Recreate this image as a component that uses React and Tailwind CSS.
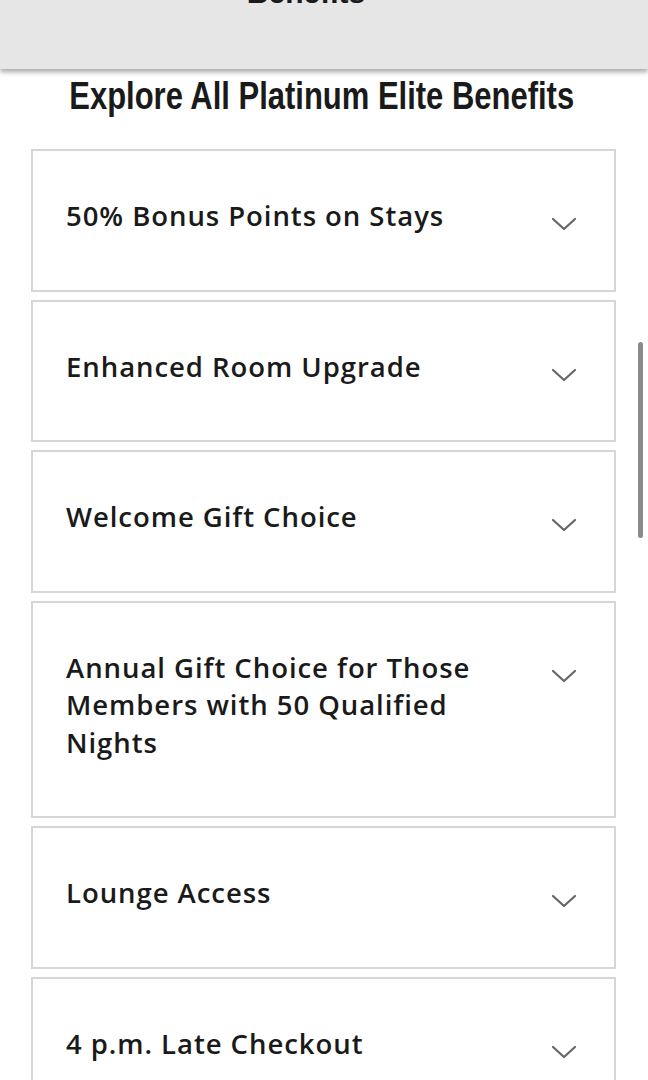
import { ChevronDown } from 'lucide-react'

const benefits = [
  '50% Bonus Points on Stays',
  'Enhanced Room Upgrade',
  'Welcome Gift Choice',
  'Annual Gift Choice for Those Members with 50 Qualified Nights',
  'Lounge Access',
  '4 p.m. Late Checkout',
]

function BenefitRow({ title }) {
  return (
    <div className="flex items-start justify-between border-2 border-[#d6d6d6] bg-white pl-[33px] pr-[37px] pt-[46px] pb-[55px]">
      <span className="max-w-[450px] text-[27.5px] font-semibold leading-[37.5px] tracking-[0.95px] text-[#1a1a1a] [font-family:'Open_Sans','Noto_Sans',sans-serif]">
        {title}
      </span>
      <svg width="26" height="16" viewBox="0 0 26 16" className="mt-[19px] shrink-0" fill="none">
        <path d="M2 3 L13 13 L24 3" stroke="#666666" strokeWidth="2.2" strokeLinecap="round" strokeLinejoin="round" />
      </svg>
    </div>
  )
}

export default function App() {
  return (
    <div className="relative h-[1080px] w-[648px] overflow-hidden bg-white">
      {/* top bar, cut off by the screenshot */}
      <div className="relative z-10 flex h-[69px] flex-col bg-[#e6e6e6] shadow-[0_3px_5px_rgba(0,0,0,0.35)]">
        <div className="-mt-[22px] flex items-center justify-center gap-2 pr-[14px]">
          <span className="text-[30px] font-bold leading-[30px] text-[#1a1a1a] [font-family:'Liberation_Sans',Arial,sans-serif]">
            Benefits
          </span>
          <ChevronDown size={14} strokeWidth={3} className="mt-[6px] text-[#1a1a1a]" />
        </div>
      </div>

      <div className="mt-[7px] flex justify-center pr-[4px]">
        <h1 className="scale-x-[0.815] whitespace-nowrap text-[38px] font-bold leading-[40px] text-[#1a1a1a] [font-family:'Liberation_Sans',Arial,sans-serif]">
          Explore All Platinum Elite Benefits
        </h1>
      </div>

      <div className="ml-[31px] mr-[32px] mt-[33px] flex flex-col gap-[8px]">
        {benefits.map((b) => (
          <BenefitRow key={b} title={b} />
        ))}
      </div>

      {/* scroll indicator */}
      <div className="absolute left-[638px] top-[342px] h-[196px] w-[5px] rounded-full bg-[#8a8a8a]" />
    </div>
  )
}
